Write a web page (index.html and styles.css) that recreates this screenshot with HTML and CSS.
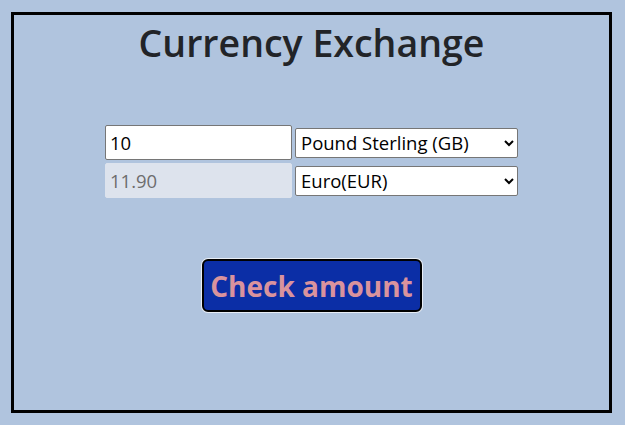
FILE: index.html
```html
<!DOCTYPE html>
<html>
<head>
<meta charset="utf-8">
<link rel="stylesheet" href="styles.css">
</head>
<body>
<div class="frame">
  <h1 class="title">Currency Exchange</h1>
  <div class="form">
    <input class="amount" type="text" value="10">
    <select class="cur">
      <option>Pound Sterling (GB)</option>
    </select>
    <input class="amount result" type="text" value="11.90" disabled>
    <select class="cur">
      <option>Euro(EUR)</option>
    </select>
  </div>
  <button class="check">Check amount</button>
</div>
</body>
</html>
```
FILE: styles.css
```css
html, body {
  margin: 0;
  padding: 0;
  background: #b0c4de;
}
body {
  padding: 12px 0 0 11px;
  font-family: "Open Sans", "Noto Sans", sans-serif;
}
.frame {
  box-sizing: border-box;
  width: 601px;
  height: 401px;
  border: 3px solid #000;
  display: flex;
  flex-direction: column;
  align-items: center;
}
.title {
  margin: 3px 0 0;
  font-size: 37.5px;
  font-weight: 600;
  color: #222428;
  line-height: 50px;
}
.form {
  margin-top: 57px;
  display: grid;
  grid-template-columns: 187px 223px;
  column-gap: 3px;
  row-gap: 3px;
  align-items: center;
}
.amount {
  box-sizing: border-box;
  height: 35px;
  width: 187px;
  border: 1px solid #767676;
  border-radius: 2px;
  padding: 0 4px;
  font-family: "Open Sans", "Noto Sans", sans-serif;
  font-size: 18.5px;
  color: #000;
  background: #fff;
}
.result {
  background: #dde3ed;
  border-color: #dde3ed;
  color: #6d6d6d;
}
.cur {
  box-sizing: border-box;
  height: 30px;
  width: 223px;
  border: 1px solid #767676;
  border-radius: 2px;
  background: #fff;
  font-family: "Open Sans", "Noto Sans", sans-serif;
  font-size: 18.5px;
  color: #000;
  padding: 0 1px;
}
.check {
  margin-top: 61px;
  box-sizing: border-box;
  width: 220px;
  height: 53px;
  background: #0b2ea6;
  border: 2px solid #000;
  border-radius: 6px;
  box-shadow: 0 0 0 1px #e8eef6;
  color: #d9939d;
  font-family: "Open Sans", "Noto Sans", sans-serif;
  font-weight: 700;
  font-size: 28px;
  padding: 0;
}
```
